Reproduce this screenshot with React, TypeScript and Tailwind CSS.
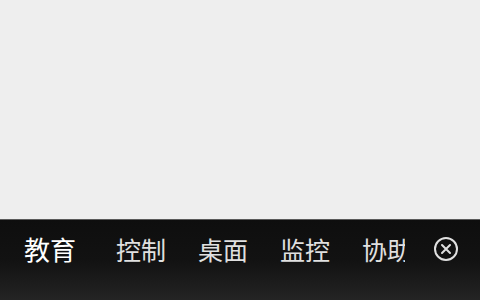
import React from 'react';

const tabs = ['控制', '桌面', '监控', '协助'];

export default function App() {
  return (
    <div
      className="h-screen w-full flex flex-col bg-[#eeeeee]"
      style={{ fontFamily: '"Noto Sans CJK SC", "Noto Sans", sans-serif' }}
    >
      <div className="flex-1" />

      {/* bottom menu bar */}
      <div className="h-[81px] flex items-start border-t border-[#5a5a5a] bg-gradient-to-b from-[#0e0e0e] via-[#121212] to-[#242424]">
        <div className="w-[405px] overflow-hidden flex items-center pt-[9px] pl-6 whitespace-nowrap">
          <span className="text-[26px] leading-[40px] font-normal text-white mr-[40px] shrink-0">教育</span>
          {tabs.map((t) => (
            <span key={t} className="text-[25px] leading-[40px] text-[#e0e0e0] mr-[32px] shrink-0">
              {t}
            </span>
          ))}
        </div>
        <div className="flex-1 flex justify-center pt-[16px] pl-[6px]">
          <svg width="26" height="26" viewBox="0 0 26 26" fill="none" stroke="#e0e0e0" strokeWidth="2" strokeLinecap="round">
            <circle cx="13" cy="13" r="11" />
            <path d="M9 9l8 8M17 9l-8 8" />
          </svg>
        </div>
      </div>
    </div>
  );
}
